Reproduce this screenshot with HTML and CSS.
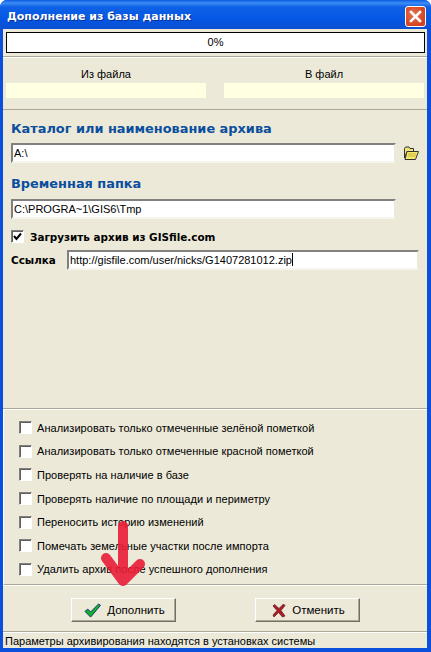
FILE: index.html
```html
<!DOCTYPE html>
<html>
<head>
    <meta charset="UTF-8">
    <meta name="viewport" content="width=device-width, initial-scale=1.0">
    <title>Дополнение из базы данных</title>
    <link rel="stylesheet" href="styles.css">
</head>
<body>
    <div class="window">
        <div class="titlebar">
            <span class="title">Дополнение из базы данных</span>
            <div class="close">
                <svg width="13" height="13" viewBox="0 0 13 13"><path d="M2 2 L11 11 M11 2 L2 11" stroke="#fff" stroke-width="2.6" stroke-linecap="square"/></svg>
            </div>
        </div>
        <div class="body">
            <div class="progress">0%</div>
            <div class="files">
                <div class="file-col">
                    <div class="file-label">Из файла</div>
                    <div class="file-box"></div>
                </div>
                <div class="file-col">
                    <div class="file-label">В файл</div>
                    <div class="file-box"></div>
                </div>
            </div>
            <div class="main">
                <div class="heading">Каталог или наименование архива</div>
                <div class="row">
                    <div class="field field-path">A:\</div>
                    <svg class="folder" width="16" height="15" viewBox="0 0 16 15">
                        <path d="M1.5 2.5 L2.5 1 H6 L7 2.5 H10.5 V5.5 H4 L1.5 12 Z" fill="#f3e27a" stroke="#333" stroke-width="1"/>
                        <path d="M4 5.5 H15.5 L12.5 13.5 H2 Z" fill="#f7e96b" stroke="#333" stroke-width="1"/>
                        <path d="M5 8 H13 M4.5 10 H12.5" stroke="#c9b437" stroke-width="1"/>
                    </svg>
                </div>
                <div class="heading heading-temp">Временная папка</div>
                <div class="field field-path">C:\PROGRA~1\GIS6\Tmp</div>
                <div class="row row-check">
                    <div class="check">
                        <svg width="9" height="9" viewBox="0 0 9 9"><path d="M1 4 L3.5 7 L8 1.5" fill="none" stroke="#000" stroke-width="2"/></svg>
                    </div>
                    <span class="check-bold">Загрузить архив из GISfile.com</span>
                </div>
                <div class="row row-link">
                    <span class="link-label">Ссылка</span>
                    <div class="field field-link">http://gisfile.com/user/nicks/G1407281012.zip<span class="caret"></span></div>
                </div>
            </div>
            <div class="options">
                <div class="option"><div class="check"></div><span>Анализировать только отмеченные зелёной пометкой</span></div>
                <div class="option"><div class="check"></div><span>Анализировать только отмеченные красной пометкой</span></div>
                <div class="option"><div class="check"></div><span>Проверять на наличие в базе</span></div>
                <div class="option"><div class="check"></div><span>Проверять наличие по площади и периметру</span></div>
                <div class="option"><div class="check"></div><span>Переносить историю изменений</span></div>
                <div class="option"><div class="check"></div><span>Помечать земельные участки после импорта</span></div>
                <div class="option"><div class="check"></div><span>Удалить архив после успешного дополнения</span></div>
            </div>
            <div class="buttons">
                <div class="btn">
                    <svg width="17" height="15" viewBox="0 0 18 16">
                        <path d="M1 9 L4 6.5 L7 9.5 L15.5 1 L17.5 2.5 L7 15 Z" fill="#14b02e" stroke="#0b2f6e" stroke-width="1"/>
                    </svg>
                    <span>Дополнить</span>
                </div>
                <div class="btn">
                    <svg width="14" height="15" viewBox="0 0 14 15">
                        <path d="M2.5 1.5 L7 5.5 L11.5 1 L13 2.5 L9 7.5 L13 13 L10.5 14 L6.5 9.5 L2 14 L1 12 L5 7.5 L1 3 Z" fill="#b31820" stroke="#5a2a2a" stroke-width="0.8"/>
                    </svg>
                    <span>Отменить</span>
                </div>
            </div>
            <div class="status">Параметры архивирования находятся в установках системы</div>
        </div>
        <svg class="arrow" width="54" height="74" viewBox="0 0 54 74">
            <path d="M25 8 V62 M8 40 L25 63 L42 46" fill="none" stroke="#ea1c36" stroke-opacity="0.9" stroke-width="10" stroke-linecap="round" stroke-linejoin="round"/>
        </svg>
    </div>
</body>
</html>
```

FILE: styles.css
```css
html, body { margin: 0; padding: 0; }
body { font-family: "Liberation Sans", Arial, sans-serif; font-size: 11px; color: #000; }

.window { position: relative; width: 431px; height: 652px; background: #0b50dc; box-sizing: border-box; padding: 0 4px 4px 3px; display: flex; flex-direction: column; border-radius: 7px 7px 0 0; overflow: hidden; }

.titlebar { height: 29px; margin: 0 -4px 0 -3px; padding: 3px 5px 0 7px; box-sizing: border-box; display: flex; align-items: center; justify-content: space-between; flex: none; background: linear-gradient(to bottom, #0a5be0 0, #3c8df5 3px, #0f61e6 7px, #0556e3 20px, #0a50d0 29px); }
.title { font-family: "DejaVu Sans", sans-serif; font-weight: bold; font-size: 11px; color: #fff; text-shadow: 1px 1px 0 #0a2f8f; }
.close { width: 21px; height: 21px; box-sizing: border-box; border: 1px solid #fff; border-radius: 3px; background: radial-gradient(circle at 40% 40%, #e8714f, #d2401e 75%); display: flex; align-items: center; justify-content: center; }

.body { flex: 1; background: #ece9d8; display: flex; flex-direction: column; min-height: 0; }

.progress { height: 21px; margin: 3px 2px 0 3px; box-sizing: border-box; border: 1px solid #000; background: #fff; text-align: center; line-height: 19px; flex: none; }

.files { height: 52px; flex: none; margin-top: 3px; padding: 0 3px; border-top: 1px solid #aca899; border-bottom: 1px solid #aca899; box-shadow: inset 0 1px 0 #fff; display: flex; justify-content: space-between; }
.file-col { width: 200px; padding-top: 11px; }
.file-label { text-align: center; height: 15px; line-height: 13px; }
.file-box { height: 15px; background: #ffffe1; }

.main { flex: 1; padding: 10px 8px 0 8px; border-bottom: 1px solid #aca899; }
.heading { font-family: "DejaVu Sans", sans-serif; font-weight: bold; font-size: 12.9px; color: #0a4f9e; height: 23px; line-height: 17px; }
.heading-temp { margin-top: 12px; height: 24px; }

.row { display: flex; align-items: center; }
.field { box-sizing: border-box; height: 20px; background: #fff; border: 2px solid; border-color: #808080 #ece9d8 #f6f5ee #808080; line-height: 17px; padding-left: 1px; white-space: nowrap; }
.field-path { width: 385px; }
.folder { margin-left: 7px; }

.row-check { margin-top: 11px; height: 13px; }
.check { width: 13px; height: 13px; box-sizing: border-box; flex: none; background: #fff; border: 1px solid; border-color: #808080 #fff #fff #808080; box-shadow: inset 1px 1px 0 #5e5e5e; display: flex; align-items: center; justify-content: center; }
.check-bold { font-family: "DejaVu Sans", sans-serif; font-weight: bold; font-size: 10.4px; margin-left: 6px; }

.row-link { margin-top: 7px; }
.link-label { font-family: "DejaVu Sans", sans-serif; font-weight: bold; font-size: 10.4px; width: 56px; flex: none; }
.field-link { width: 353px; }
.caret { display: inline-block; width: 1px; height: 13px; background: #000; vertical-align: -2px; }

.options { height: 176px; flex: none; box-sizing: border-box; padding: 6px 0 0 15px; border-top: 1px solid #fff; border-bottom: 1px solid #aca899; border-left: 1px solid #fff; }
.option { height: 23.6px; display: flex; align-items: center; letter-spacing: 0.04px; }
.option span { margin-left: 5px; }

.buttons { height: 47px; flex: none; padding-top: 12px; box-sizing: border-box; display: flex; gap: 79px; padding-left: 68px; border-top: 1px solid #fff; border-bottom: 1px solid #aca899; }
.btn { width: 105px; height: 24px; box-sizing: border-box; background: #ece9d8; border: 1px solid; border-color: #fff #716f64 #716f64 #fff; box-shadow: inset -1px -1px 0 #aca899; display: flex; align-items: center; justify-content: center; gap: 6px; padding-left: 2px; font-size: 11.5px; }

.status { flex: none; height: 15px; border-top: 1px solid #fff; padding-left: 2px; line-height: 17px; white-space: nowrap; }

.arrow { position: absolute; left: 98px; top: 518px; }
```
